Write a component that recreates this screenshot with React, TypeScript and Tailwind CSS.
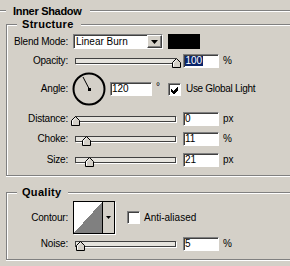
import React from 'react'

const sunken = 'border border-t-[#808080] border-l-[#808080] border-b-white border-r-white shadow-[inset_1px_1px_0_#404040]'

function Label({ children, w = 'w-[61px]' }: { children: React.ReactNode; w?: string }) {
    return <span className={`${w} shrink-0 text-right leading-none tracking-[-0.2px]`}>{children}</span>
}

function Slider({ pct }: { pct: number }) {
    return (
        <div className="relative w-[101px] h-[6px] shrink-0 border border-[#404040] bg-[#e6e4de] shadow-[1px_1px_0_#fff]">
            <svg className="absolute top-[-1px]" style={{ left: `${Math.round(pct * 101 - 5.5)}px` }} width="9" height="10" viewBox="0 0 9 10">
                <polygon points="0.5,9.5 0.5,4.5 4.5,0.5 8.5,4.5 8.5,9.5" fill="#d4d0c8" stroke="#000" strokeWidth="1" />
                <polyline points="1.5,8.5 1.5,4.9 4.5,1.9" fill="none" stroke="#fff" strokeWidth="1" />
            </svg>
        </div>
    )
}

function NumBox({ value, selected, w = 'w-[36px]' }: { value: string; selected?: boolean; w?: string }) {
    return (
        <div className={`${w} h-[14px] shrink-0 bg-white ${sunken} flex items-center pl-[1px] leading-none`}>
            {selected ? <span className="bg-[#0a246a] text-white px-[0.5px]">{value}</span> : <span>{value}</span>}
        </div>
    )
}

function Check({ checked }: { checked?: boolean }) {
    return (
        <div className={`w-[13px] h-[13px] shrink-0 bg-white ${sunken} flex items-center justify-center`}>
            {checked && (
                <svg width="9" height="9" viewBox="0 0 9 9" shapeRendering="crispEdges">
                    <path d="M1 4h1v1h1v1h1V5h1V4h1V3h1V2h1v3H8v1H7v1H6v1H5v1H3V8H2V7H1z" fill="#000" />
                </svg>
            )}
        </div>
    )
}

function SliderRow({ label, pct, value, unit, selected, className }: { label: string; pct: number; value: string; unit: string; selected?: boolean; className: string }) {
    return (
        <div className={`flex items-center ${className}`}>
            <Label>{label}</Label>
            <div className="ml-[7px]"><Slider pct={pct} /></div>
            <div className="ml-[7px]"><NumBox value={value} selected={selected} /></div>
            <span className="ml-[4px] leading-none">{unit}</span>
        </div>
    )
}

function Group({ title, children, className }: { title: string; children: React.ReactNode; className: string }) {
    return (
        <fieldset className={`ml-[6px] border border-r-0 border-[#808080] shadow-[inset_1px_1px_0_#fff,0_1px_0_#fff] ${className}`}>
            <legend className="ml-[10px] pl-[5px] pr-[7px] h-[13px] leading-[13px] bg-[#d4d0c8] font-bold text-[11px] tracking-[0.3px]">{title}</legend>
            {children}
        </fieldset>
    )
}

export default function App() {
    return (
        <div className="w-[290px] h-[266px] overflow-hidden bg-[#d4d0c8] text-black text-[10px] font-['Liberation_Sans',Arial,sans-serif]">
            <div className="mt-[5px] h-[12px] flex items-center">
                <span className="w-[6px] border-t border-t-[#808080] border-b border-b-white" />
                <span className="ml-[7px] mr-[8px] font-bold text-[11px] tracking-[-0.3px] leading-none">Inner Shadow</span>
                <span className="flex-1 border-t border-t-[#808080] border-b border-b-white" />
            </div>

            <Group title="Structure" className="mt-[1px] pb-[8px]">
                <div className="mt-[3px] h-[15px] flex items-center">
                    <Label>Blend Mode:</Label>
                    <div className={`ml-[5px] w-[90px] h-[15px] bg-white ${sunken} flex items-center`}>
                        <span className="ml-[2px] flex-1 leading-none">Linear Burn</span>
                        <div className="w-[15px] h-[13px] bg-[#d4d0c8] border border-t-white border-l-white border-b-[#404040] border-r-[#404040] shadow-[inset_-1px_-1px_0_#808080] flex items-center justify-center">
                            <svg width="7" height="4" viewBox="0 0 7 4"><polygon points="0,0 7,0 3.5,4" fill="#000" /></svg>
                        </div>
                    </div>
                    <div className="ml-[5px] w-[32px] h-[15px] bg-black" />
                </div>

                <SliderRow label="Opacity:" pct={1} value="100" unit="%" selected className="mt-[5px] h-[14px]" />

                <div className="mt-[4px] h-[34px] flex items-center">
                    <Label>Angle:</Label>
                    <svg className="ml-[4px] shrink-0" width="34" height="34" viewBox="0 0 34 34">
                        <circle cx="17" cy="17" r="15.5" fill="none" stroke="#000" strokeWidth="2" />
                        <line x1="17.5" y1="17.5" x2="11" y2="5" stroke="#000" strokeWidth="1" />
                        <rect x="16" y="16" width="3" height="3" fill="#000" />
                    </svg>
                    <div className="ml-[4px]"><NumBox value="120" w="w-[42px]" /></div>
                    <span className="ml-[4px] self-start mt-[10px] leading-none">°</span>
                    <div className="ml-[8px]"><Check checked /></div>
                    <span className="ml-[5px] leading-none tracking-[-0.3px]">Use Global Light</span>
                </div>

                <SliderRow label="Distance:" pct={0} value="0" unit="px" className="mt-[6px] h-[14px]" />
                <SliderRow label="Choke:" pct={0.11} value="11" unit="%" className="mt-[6px] h-[14px]" />
                <SliderRow label="Size:" pct={0.14} value="21" unit="px" className="mt-[7px] h-[14px]" />
            </Group>

            <Group title="Quality" className="mt-[10px] pb-[8px]">
                <div className="mt-[2px] h-[33px] flex items-center">
                    <Label>Contour:</Label>
                    <div className="ml-[5px] w-[42px] h-[33px] border border-black shadow-[1px_1px_0_#fff] flex">
                        <svg width="28" height="31" viewBox="0 0 28 31" shapeRendering="crispEdges">
                            <rect width="28" height="31" fill="#fff" />
                            <polygon points="0,31 28,0 28,31" fill="#808080" />
                        </svg>
                        <div className="flex-1 border-l border-black bg-[#d4d0c8] flex items-center justify-center">
                            <svg width="5" height="3" viewBox="0 0 5 3"><polygon points="0,0 5,0 2.5,3" fill="#000" /></svg>
                        </div>
                    </div>
                    <div className="ml-[12px]"><Check /></div>
                    <span className="ml-[4px] leading-none">Anti-aliased</span>
                </div>

                <SliderRow label="Noise:" pct={0.05} value="5" unit="%" className="mt-[3px] h-[14px]" />
            </Group>
        </div>
    )
}
